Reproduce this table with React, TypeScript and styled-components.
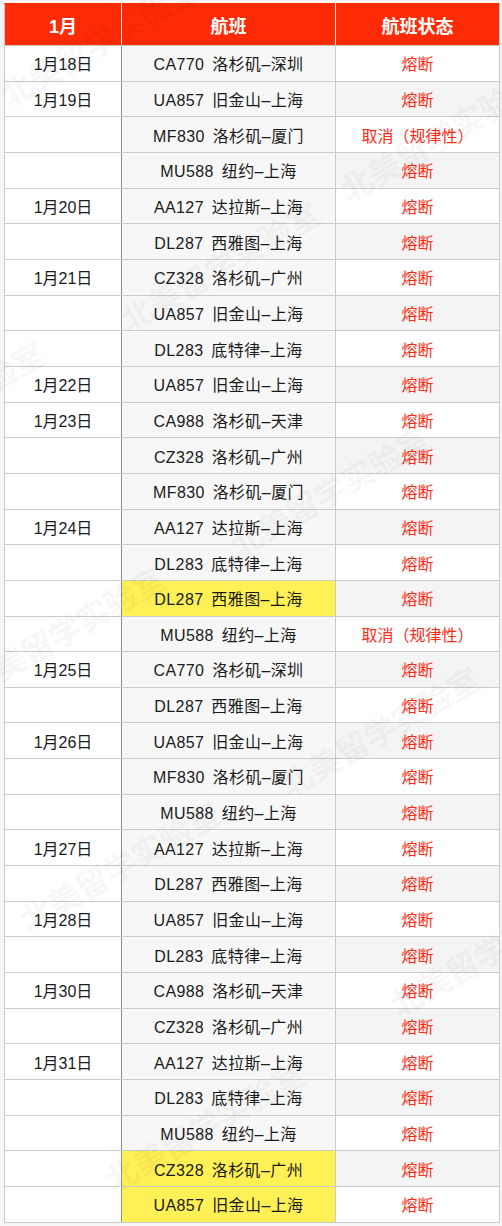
import * as React from 'react';
import styled, { createGlobalStyle } from 'styled-components';

const GlobalStyle = createGlobalStyle`
    body {
        margin: 0;
        background: #f6f6f6;
        font-family: "Liberation Sans", "Noto Sans CJK SC", sans-serif;
    }
`;

const Page = styled.div`
    position: relative;
    height: 1226px;
    padding: 3px 3px 0 4px;
    box-sizing: border-box;
    overflow: hidden;
`;

const Table = styled.table`
    width: 495px;
    table-layout: fixed;
    border-collapse: collapse;
    background: #fff;
    border: 1px solid #c9c9c9;
`;

const HeadCell = styled.th`
    height: 41px;
    padding: 0;
    background: #fe2b06;
    color: #fff;
    font-size: 18px;
    font-weight: 700;
    text-align: center;
    border: 1px solid #fff;
    border-top-color: #fe2b06;
    border-bottom-color: #c9c9c9;
    &:first-child {
        border-left-color: #c9c9c9;
    }
    &:last-child {
        border-right-color: #c9c9c9;
    }
`;

const Row = styled.tr`
    height: 35.67px;
`;

const Cell = styled.td`
    padding: 0;
    font-size: 16px;
    color: #1b1b1b;
    text-align: center;
    white-space: nowrap;
    border: 1px solid #cbcbcb;
`;

const DateCell = styled(Cell)`
    background: #fff;
    border-right-color: #8e8e8e;
`;

const FlightCell = styled(Cell)<{ $highlight?: boolean }>`
    background: ${p => (p.$highlight ? '#fff056' : '#f7f7f7')};
    border-left-color: #8e8e8e;
    letter-spacing: 0.4px;
    word-spacing: 3px;
`;

const StatusCell = styled(Cell)<{ $striped: boolean }>`
    background: ${p => (p.$striped ? '#f4f4f4' : '#fff')};
    color: #ff2b14;
`;

const Watermark = styled.span.attrs<{ $x: number; $y: number }>(p => ({
    style: { left: p.$x, top: p.$y },
}))`
    position: absolute;
    transform: rotate(-30deg);
    transform-origin: left bottom;
    font-family: "Noto Sans CJK SC", sans-serif;
    font-size: 32px;
    font-weight: 700;
    line-height: 1;
    white-space: nowrap;
    color: rgba(0, 0, 0, 0.05);
    pointer-events: none;
    user-select: none;
`;

type Flight = {
    date?: string;
    flight: string;
    status?: string;
    highlight?: boolean;
};

const CANCEL = '取消（规律性）';

const flights: Flight[] = [
    { date: '1月18日', flight: 'CA770 洛杉矶–深圳' },
    { date: '1月19日', flight: 'UA857 旧金山–上海' },
    { flight: 'MF830 洛杉矶–厦门', status: CANCEL },
    { flight: 'MU588 纽约–上海' },
    { date: '1月20日', flight: 'AA127 达拉斯–上海' },
    { flight: 'DL287 西雅图–上海' },
    { date: '1月21日', flight: 'CZ328 洛杉矶–广州' },
    { flight: 'UA857 旧金山–上海' },
    { flight: 'DL283 底特律–上海' },
    { date: '1月22日', flight: 'UA857 旧金山–上海' },
    { date: '1月23日', flight: 'CA988 洛杉矶–天津' },
    { flight: 'CZ328 洛杉矶–广州' },
    { flight: 'MF830 洛杉矶–厦门' },
    { date: '1月24日', flight: 'AA127 达拉斯–上海' },
    { flight: 'DL283 底特律–上海' },
    { flight: 'DL287 西雅图–上海', highlight: true },
    { flight: 'MU588 纽约–上海', status: CANCEL },
    { date: '1月25日', flight: 'CA770 洛杉矶–深圳' },
    { flight: 'DL287 西雅图–上海' },
    { date: '1月26日', flight: 'UA857 旧金山–上海' },
    { flight: 'MF830 洛杉矶–厦门' },
    { flight: 'MU588 纽约–上海' },
    { date: '1月27日', flight: 'AA127 达拉斯–上海' },
    { flight: 'DL287 西雅图–上海' },
    { date: '1月28日', flight: 'UA857 旧金山–上海' },
    { flight: 'DL283 底特律–上海' },
    { date: '1月30日', flight: 'CA988 洛杉矶–天津' },
    { flight: 'CZ328 洛杉矶–广州' },
    { date: '1月31日', flight: 'AA127 达拉斯–上海' },
    { flight: 'DL283 底特律–上海' },
    { flight: 'MU588 纽约–上海' },
    { flight: 'CZ328 洛杉矶–广州', highlight: true },
    { flight: 'UA857 旧金山–上海', highlight: true },
];

// bottom-left corner of each "北美留学实验室" mark
const marks = [
    { x: 10, y: 110 },
    { x: 130, y: 335 },
    { x: -145, y: 475 },
    { x: 240, y: 560 },
    { x: -25, y: 700 },
    { x: 290, y: 800 },
    { x: 30, y: 935 },
    { x: 400, y: 1020 },
    { x: 115, y: 1195 },
    { x: 350, y: 205 },
];

export default function App() {
    return (
        <Page>
            <GlobalStyle />
            <Table>
                <colgroup>
                    <col style={{ width: 117 }} />
                    <col style={{ width: 214 }} />
                    <col style={{ width: 164 }} />
                </colgroup>
                <thead>
                    <tr>
                        <HeadCell>1月</HeadCell>
                        <HeadCell>航班</HeadCell>
                        <HeadCell>航班状态</HeadCell>
                    </tr>
                </thead>
                <tbody>
                    {flights.map((f, i) => (
                        <Row key={i}>
                            <DateCell>{f.date || ''}</DateCell>
                            <FlightCell $highlight={f.highlight}>{f.flight}</FlightCell>
                            <StatusCell $striped={i % 2 === 1}>{f.status || '熔断'}</StatusCell>
                        </Row>
                    ))}
                </tbody>
            </Table>
            {marks.map((m, i) => (
                <Watermark key={i} $x={m.x} $y={m.y - 32}>北美留学实验室</Watermark>
            ))}
        </Page>
    );
}
